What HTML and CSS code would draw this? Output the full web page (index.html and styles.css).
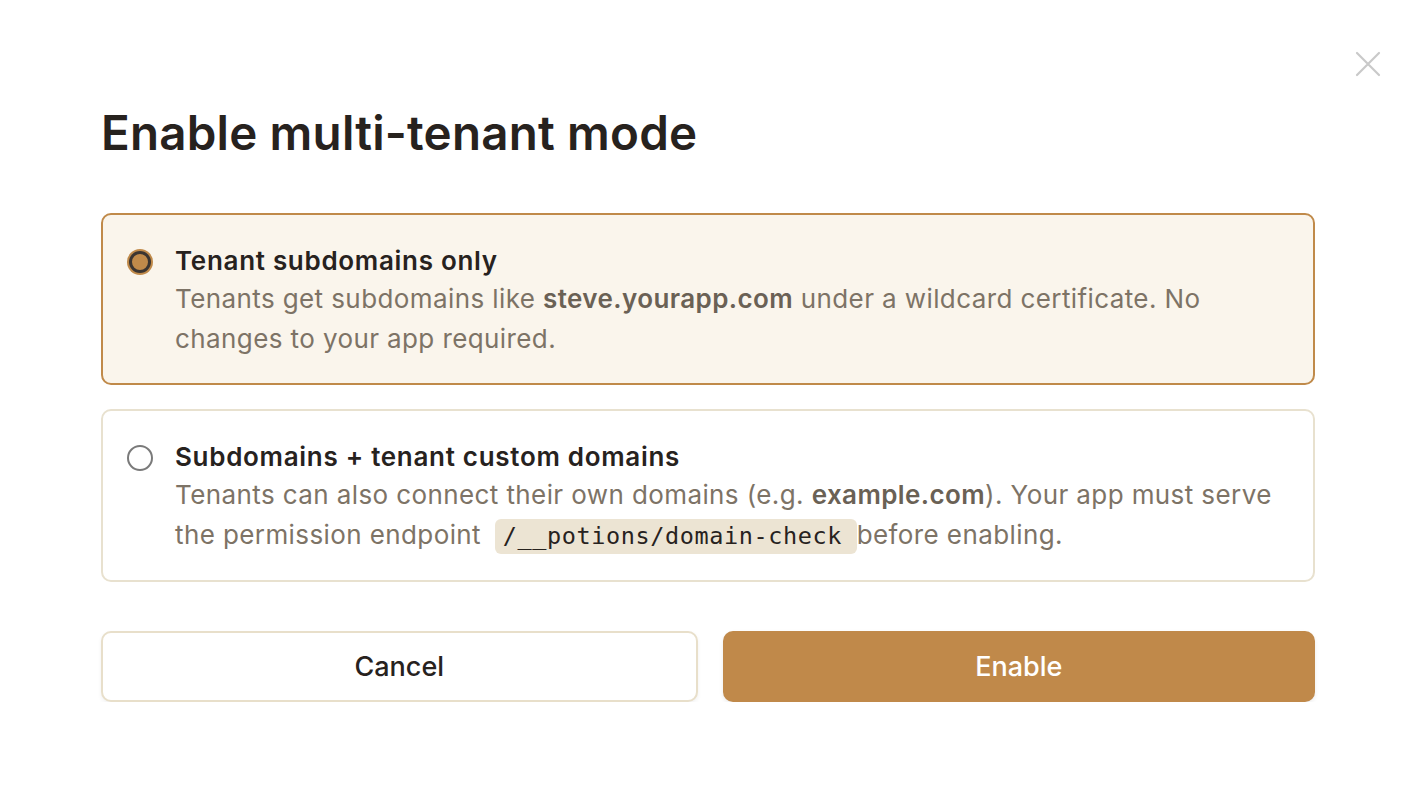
FILE: index.html
```html
<!DOCTYPE html>
<html>
<head>
<meta charset="utf-8">
<link rel="stylesheet" href="styles.css">
</head>
<body>
<div class="modal">
  <button class="close" aria-label="Close">
    <svg width="26" height="26" viewBox="0 0 26 26"><path d="M2 2 L24 24 M24 2 L2 24" stroke="#c9c9c9" stroke-width="2.2" stroke-linecap="round" fill="none"/></svg>
  </button>
  <h1 class="title">Enable multi-tenant mode</h1>
  <div class="options">
    <label class="option selected">
      <span class="radio on"></span>
      <span class="text">
        <span class="opt-title">Tenant subdomains only</span>
        <span class="opt-desc">Tenants get subdomains like <b>steve.yourapp.com</b> under a wildcard certificate. No changes to your app required.</span>
      </span>
    </label>
    <label class="option">
      <span class="radio"></span>
      <span class="text">
        <span class="opt-title">Subdomains + tenant custom domains</span>
        <span class="opt-desc">Tenants can also connect their own domains (e.g. <b>example.com</b>). Your app must serve the permission endpoint <code>/__potions/domain-check </code>before enabling.</span>
      </span>
    </label>
  </div>
  <div class="actions">
    <button class="btn cancel">Cancel</button>
    <button class="btn enable">Enable</button>
  </div>
</div>
</body>
</html>
```
FILE: styles.css
```css
html, body {
  margin: 0;
  padding: 0;
  background: #ffffff;
}
body {
  font-family: Inter, "Noto Sans", sans-serif;
  color: #27221e;
}
.modal {
  position: relative;
  width: 1214px;
  padding: 100px 101px 0 101px;
}
.close {
  position: absolute;
  top: 51px;
  right: 35px;
  background: none;
  border: 0;
  padding: 0;
  width: 26px;
  height: 26px;
  cursor: pointer;
}
.title {
  margin: 0;
  font-size: 47.5px;
  font-weight: 600;
  line-height: 66px;
  letter-spacing: 0.2px;
  color: #27221e;
}
.options {
  margin-top: 47px;
  display: flex;
  flex-direction: column;
  gap: 24px;
}
.option {
  display: flex;
  align-items: flex-start;
  gap: 22px;
  padding: 28px 24px 24px 24px;
  border: 2px solid #e8e1cf;
  border-radius: 10px;
  background: #ffffff;
}
.option.selected {
  border-color: #c08a4a;
  background: #faf5ec;
}
.radio {
  flex: none;
  box-sizing: border-box;
  width: 26px;
  height: 26px;
  margin-top: 6px;
  border-radius: 50%;
  border: 2px solid #7a7a7a;
  background: #fff;
}
.radio.on {
  border: 3px solid #3b3531;
  background: #c08a4a;
  box-shadow: 0 0 0 2px #c08a4a;
  width: 22px;
  height: 22px;
  margin: 8px 2px 0 2px;
}
.text {
  display: flex;
  flex-direction: column;
}
.opt-title {
  font-size: 26px;
  font-weight: 600;
  line-height: 36px;
  color: #27221e;
  letter-spacing: 0.7px;
}
.opt-desc {
  font-size: 26px;
  line-height: 40px;
  color: #7d7366;
  letter-spacing: 0.4px;
}
.opt-desc b {
  font-weight: 600;
  color: #6a6155;
}
code {
  font-family: "DejaVu Sans Mono", "Liberation Mono", monospace;
  font-size: 23.5px;
  color: #27221e;
  background: #ece4d3;
  border-radius: 6px;
  padding: 3px 0 4px 8px;
  margin-left: 6px;
  letter-spacing: 0.6px;
  white-space: pre;
}
.actions {
  margin-top: 49px;
  display: flex;
  gap: 25px;
}
.btn {
  flex: 1;
  height: 71px;
  border-radius: 10px;
  font-family: Inter, "Noto Sans", sans-serif;
  font-size: 27px;
  font-weight: 500;
  cursor: pointer;
}
.cancel {
  background: #ffffff;
  border: 2px solid #e8dfca;
  color: #27221e;
  box-shadow: 0 2px 4px rgba(0,0,0,0.06);
}
.enable {
  background: #c0894a;
  border: 0;
  color: #ffffff;
  box-shadow: 0 2px 4px rgba(0,0,0,0.08);
}
```
